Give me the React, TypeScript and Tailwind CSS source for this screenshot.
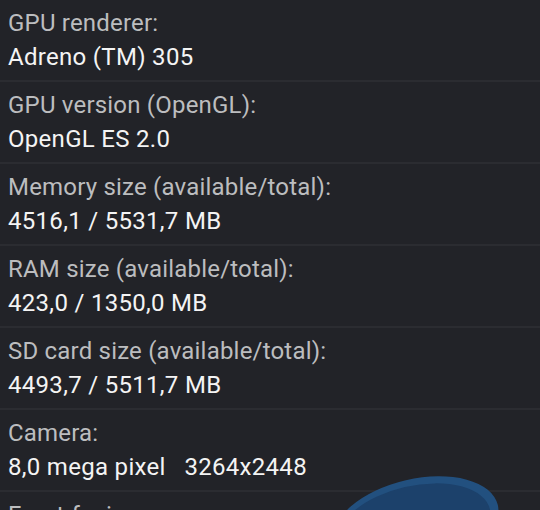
import React from "react";

const items: [string, string][] = [
  ["GPU renderer:", "Adreno (TM) 305"],
  ["GPU version (OpenGL):", "OpenGL ES 2.0"],
  ["Memory size (available/total):", "4516,1 / 5531,7 MB"],
  ["RAM size (available/total):", "423,0 / 1350,0 MB"],
  ["SD card size (available/total):", "4493,7 / 5511,7 MB"],
  ["Camera:", "8,0 mega pixel\u00a0\u00a0\u00a03264x2448"],
  ["Front-facing camera:", "1,9 mega pixel"],
];

export default function App() {
  return (
    <div
      className="relative h-[510px] w-[540px] overflow-hidden bg-[#222328]"
      style={{ fontFamily: "Roboto, 'Noto Sans', sans-serif" }}
    >
      <div className="flex flex-col">
        {items.map(([label, value]) => (
          <div
            key={label}
            className="flex flex-col gap-[4px] border-b-2 border-[#2b2c31] px-[8px] pt-[8px] pb-[8px]"
          >
            <div className="whitespace-nowrap text-[24px] leading-[30px] tracking-[0.2px] text-[#bcbdbf]">{label}</div>
            <div className="whitespace-nowrap text-[24px] leading-[30px] tracking-[0.3px] text-[#f4f4f4]">{value}</div>
          </div>
        ))}
      </div>
      <svg
        className="absolute left-[340px] top-[460px]"
        width="200"
        height="50"
        viewBox="0 0 200 50"
      >
        <ellipse cx="76" cy="64" rx="84" ry="45" transform="rotate(-13 76 64)" fill="#22507f" />
        <ellipse cx="74" cy="67" rx="78" ry="41" transform="rotate(-13 74 67)" fill="#1c416b" />
      </svg>
    </div>
  );
}
